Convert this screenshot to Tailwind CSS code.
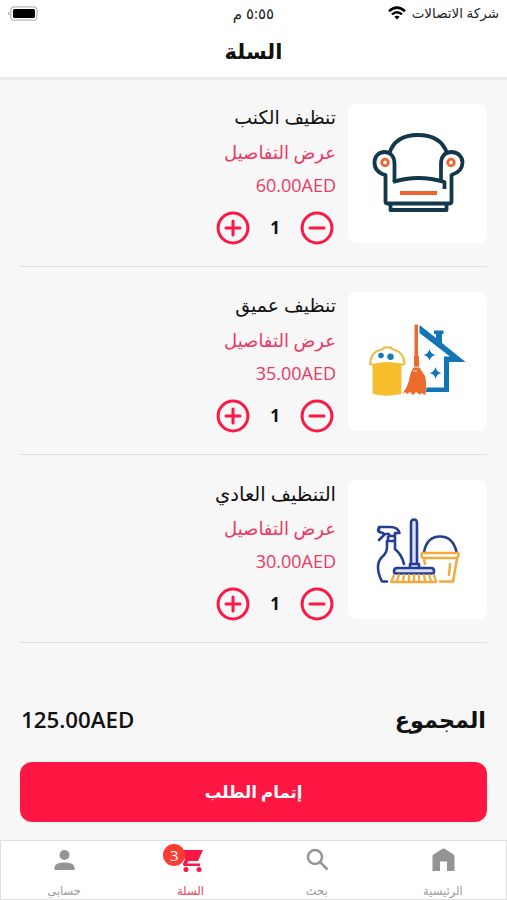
<!DOCTYPE html>
<html lang="ar" dir="rtl">
<head>
    <meta charset="UTF-8">
    <meta name="viewport" content="width=device-width, initial-scale=1.0">
    <title>السلة</title>
    <script src="https://cdn.jsdelivr.net/npm/@tailwindcss/browser@4"></script>
</head>
<body class="bg-[#f7f7f7] w-[507px] h-[900px] overflow-hidden flex flex-col font-['Open_Sans','DejaVu_Sans',sans-serif] text-[#111]">
    <header class="h-[80px] shrink-0 bg-white border-b-3 border-[#ebebeb]">
        <div class="grid grid-cols-3 items-center h-[26px] px-2 text-[13.5px] text-[#222]">
            <div class="flex items-center gap-1.5 whitespace-nowrap">
                <span>شركة الاتصالات</span>
                <svg class="w-[18px] h-[14px]" viewBox="0 0 18 14" fill="none" stroke="#000" stroke-width="2.5">
                    <path d="M1 5.2Q9-2 17 5.2M4 8.4Q9 4 14 8.4"/>
                    <path d="M9 13.5L6.3 10.8Q9 8.7 11.7 10.8Z" fill="#000" stroke="none"/>
                </svg>
            </div>
            <div class="text-center text-[15px]">٥:٥٥ م</div>
            <svg class="w-[30px] h-[15px] justify-self-end" viewBox="0 0 30 15">
                <rect x="2.8" y="0.8" width="26.2" height="13.4" rx="3.5" fill="#fff" stroke="#b9b9b9" stroke-width="1.3"/>
                <rect x="5" y="3" width="22" height="9" rx="1.5" fill="#000"/>
                <path d="M1.500 5.500v4Q0 9 0 7.500T1.500 5.500Z" fill="#aaa"/>
            </svg>
        </div>
        <h1 class="h-[50px] leading-[50px] text-center text-[21px] font-bold">السلة</h1>
    </header>

    <main class="px-5 flex-1">
        <section class="h-[187px] pt-[24px] flex gap-[12px] border-b border-[#dedede]">
            <div class="size-[139px] rounded-lg bg-white shrink-0">
                <svg class="size-[139px]" viewBox="0 0 139 139" fill="none" stroke="#14384b" stroke-width="3.8" stroke-linejoin="round">
                    <path d="M41.500 49C46 35 57 31 70 31S94 35 99 49"/>
                    <path d="M46.500 78V60C46.500 52 42 48 36.500 48C30 48 26.500 53 26.500 58.500C26.500 65 30 69 37.500 71V97.500Q37.500 99.500 40 99.500H101Q103.500 99.500 103.500 97.500V71C110 69 114.500 65 114.500 58.500C114.500 53 110 48 103.500 48C97 48 93 52 93 60V76"/>
                    <path d="M45 78Q70 70 96.500 78V85M42.500 101V106H98.500V101"/>
                    <circle cx="37" cy="58.500" r="3.300" stroke="#f0632f" stroke-width="2.800"/>
                    <circle cx="103" cy="58.500" r="3.300" stroke="#f0632f" stroke-width="2.800"/>
                    <path d="M52 89H89" stroke="#f0632f" stroke-width="4"/>
                </svg>
            </div>
            <div>
                <h2 class="h-[27px] leading-[27px] text-[18.8px]">تنظيف الكنب</h2>
                <a class="block mt-1 h-[34px] leading-[34px] text-[18px] text-[#ec3762]">عرض التفاصيل</a>
                <p class="h-[32px] leading-[32px] text-[18px] text-right text-[#ec3762]" dir="ltr">60.00AED</p>
                <div class="mt-[10px] flex items-center w-[118px] ms-[2px] justify-between">
                    <svg class="size-[34px]" viewBox="0 0 34 34" fill="none" stroke="#fc1744" stroke-width="3" stroke-linecap="round"><circle cx="17" cy="17" r="14.900"/><path d="M10 17H24"/></svg>
                    <span class="text-[17px] font-bold">1</span>
                    <svg class="size-[34px]" viewBox="0 0 34 34" fill="none" stroke="#fc1744" stroke-width="3" stroke-linecap="round"><circle cx="17" cy="17" r="14.900"/><path d="M10 17H24M17 10V24"/></svg>
                </div>
            </div>
        </section>

        <section class="h-[188px] pt-[25px] flex gap-[12px] border-b border-[#dedede]">
            <div class="size-[139px] rounded-lg bg-white shrink-0">
                <svg class="size-[139px]" viewBox="0 0 139 139" fill="none">
                    <!-- bucket -->
                    <path d="M25 73H53V101.500Q38 105 25 101.500Z" fill="#f8bd2d" stroke="#f2c04c"/>
                    <path d="M22 72Q23 60 32 58Q36 57 36 55.500H43Q43 57 47 58Q56 61 56.500 72Q39 77 22 72Z" fill="#fff" stroke="#f2b83c" stroke-width="2"/>
                    <path d="M27 71.500Q39 68.500 53 71.500L53 77H25Z" fill="#f8bd2d"/>
                    <circle cx="33" cy="63.500" r="2.800" fill="#167ab4"/><circle cx="42.500" cy="64.800" r="3.200" fill="#167ab4"/>
                    <!-- house -->
                    <path d="M71.500 33L88 46V42H86V38.500H95.500V42H94V51L117.500 70H101V100H78L78.500 95.500H96V64.500H102L71.500 41Z" fill="#1275b5"/>
                    <path d="M81.500 57Q82.500 62 87.500 63Q82.500 64 81.500 69Q80.500 64 75.500 63Q80.500 62 81.500 57ZM87.500 75Q88.500 80 93.500 81Q88.500 82 87.500 87Q86.500 82 81.500 81Q86.500 80 87.500 75Z" fill="#1275b5"/>
                    <!-- broom -->
                    <path d="M66.500 32.500H70V64H71V75L77 84Q79 92 77.500 103L73 101L72 103L68 100L65 103L62 100L59 102L57 100L54 102Q59 96 61 89Q62 80 66 75V64H66.500Z" fill="#eb6a2c"/>
                    <path d="M66 75H71M65 79H69" stroke="#fff" stroke-width=".8"/>
                </svg>
            </div>
            <div>
                <h2 class="h-[27px] leading-[27px] text-[19px]">تنظيف عميق</h2>
                <a class="block mt-1 h-[34px] leading-[34px] text-[18px] text-[#ec3762]">عرض التفاصيل</a>
                <p class="h-[32px] leading-[32px] text-[18px] text-right text-[#ec3762]" dir="ltr">35.00AED</p>
                <div class="mt-[10px] flex items-center w-[118px] ms-[2px] justify-between">
                    <svg class="size-[34px]" viewBox="0 0 34 34" fill="none" stroke="#fc1744" stroke-width="3" stroke-linecap="round"><circle cx="17" cy="17" r="14.900"/><path d="M10 17H24"/></svg>
                    <span class="text-[17px] font-bold">1</span>
                    <svg class="size-[34px]" viewBox="0 0 34 34" fill="none" stroke="#fc1744" stroke-width="3" stroke-linecap="round"><circle cx="17" cy="17" r="14.900"/><path d="M10 17H24M17 10V24"/></svg>
                </div>
            </div>
        </section>

        <section class="h-[188px] pt-[25px] flex gap-[12px] border-b border-[#dedede]">
            <div class="size-[139px] rounded-lg bg-white shrink-0">
                <svg class="size-[139px]" viewBox="0 0 139 139" fill="none" stroke="#263e91" stroke-width="2.600" stroke-linejoin="round" stroke-linecap="round">
                    <!-- spray bottle -->
                    <path d="M31 47L30 50.500M31 47H42Q50 47 51.500 53H47V56H41V54H37L31 60M31 47V52L35 53M40 57V61H47V57M39 61V67Q39 73 34 77Q30 81 30 87Q30 94 34 101.500H39M47 61V69Q54 75 56 84"/>
                    <!-- brush -->
                    <path d="M63 83V43Q63 39.500 66 39.500T69 43V83M62 84H71V88H62ZM49 88H83Q86 88 86 91V92Q86 93.500 84 93.500H48Q46 93.500 46 91.500Q46 88 49 88Z" fill="#d9e0f4"/>
                    <path d="M46 95L43 102H88L86 95M51 95L49 101M56 95L55 101M61 95V101M66 95V101M71 95V101M76 95L77 101M81 95L83 101" stroke="#f1aa3c" stroke-width="2.300"/>
                    <!-- bucket -->
                    <path d="M76 72Q79 56.500 92 56.500T108.500 72"/>
                    <path d="M75 73H109Q111 73 110.500 75Q110 78 108 78H76Q73.500 78 73.500 75.500Q73.500 73 75 73ZM76 79L77 84M109 79L105 101.500H92M102 84L101 95" stroke="#f1aa3c" stroke-width="2.500"/>
                </svg>
            </div>
            <div>
                <h2 class="h-[27px] leading-[27px] text-[19.5px]">التنظيف العادي</h2>
                <a class="block mt-1 h-[34px] leading-[34px] text-[18px] text-[#ec3762]">عرض التفاصيل</a>
                <p class="h-[32px] leading-[32px] text-[18px] text-right text-[#ec3762]" dir="ltr">30.00AED</p>
                <div class="mt-[10px] flex items-center w-[118px] ms-[2px] justify-between">
                    <svg class="size-[34px]" viewBox="0 0 34 34" fill="none" stroke="#fc1744" stroke-width="3" stroke-linecap="round"><circle cx="17" cy="17" r="14.900"/><path d="M10 17H24"/></svg>
                    <span class="text-[17px] font-bold">1</span>
                    <svg class="size-[34px]" viewBox="0 0 34 34" fill="none" stroke="#fc1744" stroke-width="3" stroke-linecap="round"><circle cx="17" cy="17" r="14.900"/><path d="M10 17H24M17 10V24"/></svg>
                </div>
            </div>
        </section>

        <div class="mt-[59px] ps-[1px] pe-[1px] h-[36px] flex items-center justify-between text-[22.3px] font-semibold">
            <span>المجموع</span>
            <span dir="ltr">125.00AED</span>
        </div>
        <button class="mt-[24px] w-full h-[60px] rounded-xl bg-[#ff1744] text-white text-[16.5px] font-bold">إتمام الطلب</button>
    </main>

    <nav class="h-[60px] shrink-0 bg-white border border-[#dfdfdf] grid grid-cols-4 text-[11.5px] text-[#999]">
        <a class="flex flex-col items-center pt-[7px]">
            <svg class="size-[24px]" viewBox="0 0 24 24" fill="#949494"><path d="M11 1Q12.500 0 14 1L22.500 6.500Q23.500 7 23.500 8.500V23H16V13.500H9V23H1.500V8.500Q1.500 7 2.500 6.500Z"/></svg>
            <span class="mt-[10px] leading-[18px]">الرئيسية</span>
        </a>
        <a class="flex flex-col items-center pt-[7px]">
            <svg class="size-[24px]" viewBox="0 0 24 24" fill="none" stroke="#949494" stroke-width="2.500"><circle cx="10" cy="9" r="7"/><path d="M15 14L22.500 21.500"/></svg>
            <span class="mt-[10px] leading-[18px]">بحث</span>
        </a>
        <a class="flex flex-col items-center pt-[7px] text-[#ec3762]">
            <div class="relative">
                <svg class="size-[24px] translate-x-px" viewBox="0 0 24 24" fill="#fc1744"><path d="M1 2H24L19 13H9.500L8 15.500H21V18H5.500Q3 17 4.500 14.500L6 11.500Z"/><circle cx="7" cy="21.500" r="2.500"/><circle cx="20" cy="21.500" r="2.500"/></svg>
                <span class="absolute -left-[15px] -top-[4px] size-[22px] rounded-full bg-[#fb3d31] text-white text-[15px] leading-[22px] text-center">3</span>
            </div>
            <span class="mt-[10px] leading-[18px]">السلة</span>
        </a>
        <a class="flex flex-col items-center pt-[7px]">
            <svg class="size-[24px]" viewBox="0 0 24 24" fill="#949494"><circle cx="12.500" cy="7" r="5"/><path d="M2.500 22V19.500Q3 14.500 12.500 14.500T22.500 19.500V22Z"/></svg>
            <span class="mt-[10px] leading-[18px]">حسابي</span>
        </a>
    </nav>
</body>
</html>
